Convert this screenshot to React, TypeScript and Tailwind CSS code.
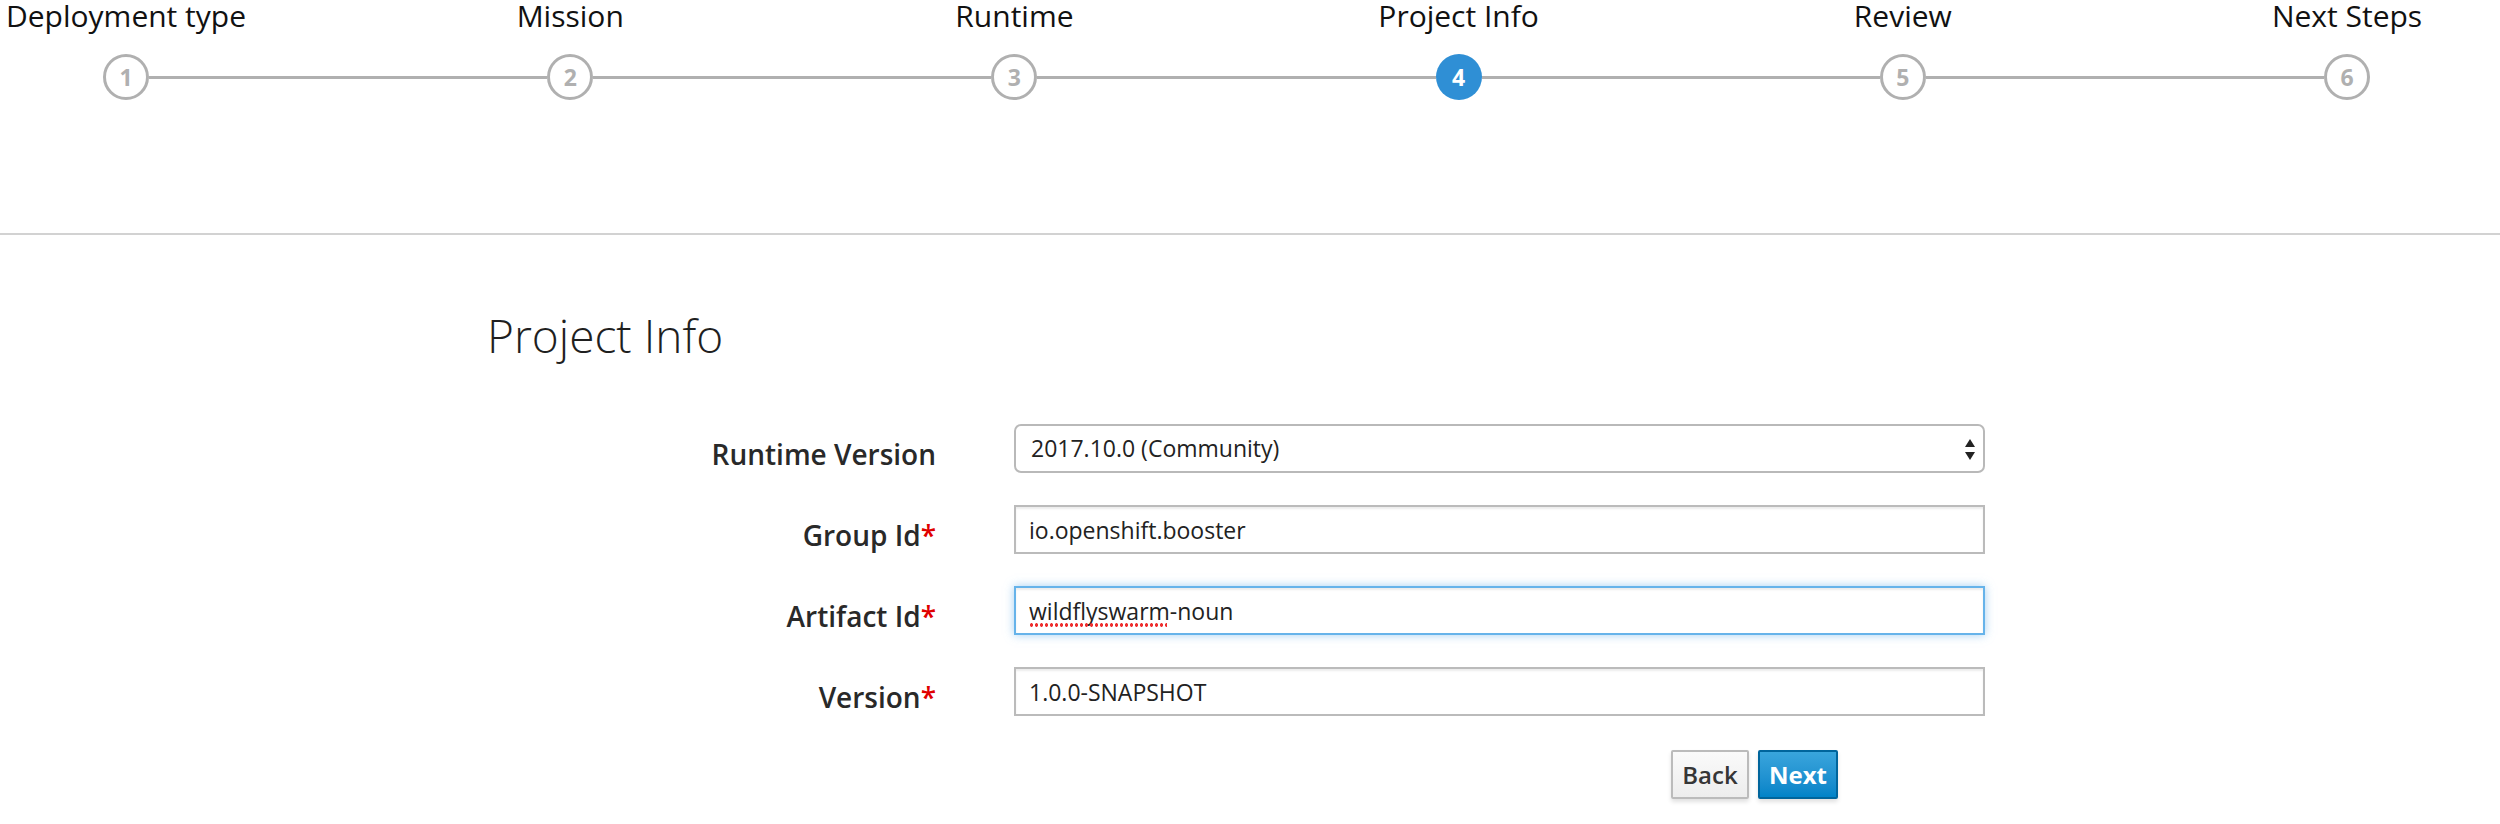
import { Fragment } from "react"

const steps = [
  { n: 1, title: "Deployment type" },
  { n: 2, title: "Mission" },
  { n: 3, title: "Runtime" },
  { n: 4, title: "Project Info" },
  { n: 5, title: "Review" },
  { n: 6, title: "Next Steps" }
]

const current = 4

function StepBar() {
  return (
    <div className="pl-[103px] pr-[130px]">
      {/* titles */}
      <div className="flex h-[32px] pt-[1px]">
        {steps.map((s, i) => (
          <Fragment key={s.n}>
            {i > 0 && <div className="flex-1" />}
            <div className="w-[46px] flex justify-center">
              <span className="whitespace-nowrap text-[30px] leading-[30px] text-[#111]">
                {s.title}
              </span>
            </div>
          </Fragment>
        ))}
      </div>
      {/* circles + lines */}
      <div className="flex items-center mt-[22px]">
        {steps.map((s, i) => (
          <Fragment key={s.n}>
            {i > 0 && <div className="flex-1 h-[3px] bg-[#b0b0b0]" />}
            {s.n === current ? (
              <div className="w-[46px] h-[46px] rounded-full bg-[#2f8fd5] flex items-center justify-center text-white font-bold text-[23px] leading-none">
                {s.n}
              </div>
            ) : (
              <div className="w-[46px] h-[46px] rounded-full border-[3px] border-[#b0b0b0] bg-white flex items-center justify-center text-[#b0b0b0] font-bold text-[23px] leading-none">
                {s.n}
              </div>
            )}
          </Fragment>
        ))}
      </div>
    </div>
  )
}

function Label({ text, required }: { text: string; required?: boolean }) {
  return (
    <div className="pt-[16px] text-right text-[28px] leading-[28px] font-semibold text-[#292929]">
      {text}
      {required && <span className="text-[#e00000]">*</span>}
    </div>
  )
}

const inputCls =
  "w-full h-[49px] border-2 border-[#bbbbbb] bg-white px-[13px] text-[23px] text-[#222] outline-none shadow-[inset_0_2px_2px_rgba(3,3,3,0.075)]"

function App() {
  return (
    <div className="w-[2500px] h-[824px] bg-white font-['Open_Sans',sans-serif] overflow-hidden">
      <StepBar />

      <div className="mt-[133px] h-[2px] bg-[#d2d2d2]" />

      <div className="pl-[487px] pt-[76px]">
        <h1 className="text-[46px] leading-[48px] font-light text-[#1f1f1f]">Project Info</h1>

        <div className="mt-[65px] grid grid-cols-[449px_971px] gap-x-[78px] gap-y-[32px]">
          <Label text="Runtime Version" />
          <div className="relative">
            <select
              defaultValue="2017.10.0"
              className="appearance-none w-full h-[49px] rounded-[7px] border-2 border-[#b9b9b9] bg-white pl-[15px] text-[23px] text-[#222] outline-none">
              <option value="2017.10.0">2017.10.0 (Community)</option>
            </select>
            <svg
              className="absolute right-[10px] top-[15px] pointer-events-none"
              width="10"
              height="21"
              viewBox="0 0 10 21">
              <path d="M5 0 L10 8 L0 8 Z" fill="#222" />
              <path d="M0 13 L10 13 L5 21 Z" fill="#222" />
            </svg>
          </div>

          <Label text="Group Id" required />
          <input className={inputCls} defaultValue="io.openshift.booster" spellCheck={false} />

          <Label text="Artifact Id" required />
          <div className="relative">
            <input
              className="w-full h-[49px] border-2 border-[#66b3ea] bg-white px-[13px] text-[23px] text-[#222] outline-none shadow-[inset_0_2px_2px_rgba(3,3,3,0.075),0_0_9px_rgba(102,175,233,0.6)]"
              defaultValue="wildflyswarm-noun"
              spellCheck={false}
            />
            <span className="absolute left-[15px] top-[37px] w-[138px] h-[4px] bg-[radial-gradient(circle,#ee3030_1.5px,transparent_2px)] bg-[length:5px_4px] pointer-events-none" />
          </div>

          <Label text="Version" required />
          <input className={inputCls} defaultValue="1.0.0-SNAPSHOT" spellCheck={false} />

          <div />
          <div className="flex gap-[9px] pl-[657px] pt-[2px]">
            <button className="h-[49px] w-[78px] rounded-[2px] border-2 border-[#bbbbbb] bg-gradient-to-b from-[#fafafa] to-[#ededed] text-[24px] font-semibold text-[#363636] shadow-[0_3px_4px_rgba(0,0,0,0.12)]">
              Back
            </button>
            <button className="h-[49px] w-[80px] rounded-[2px] border-2 border-[#00659c] bg-gradient-to-b from-[#39a5dc] to-[#0083c8] text-[24px] font-bold text-white shadow-[0_3px_4px_rgba(0,0,0,0.12)]">
              Next
            </button>
          </div>
        </div>
      </div>
    </div>
  )
}

export default App
